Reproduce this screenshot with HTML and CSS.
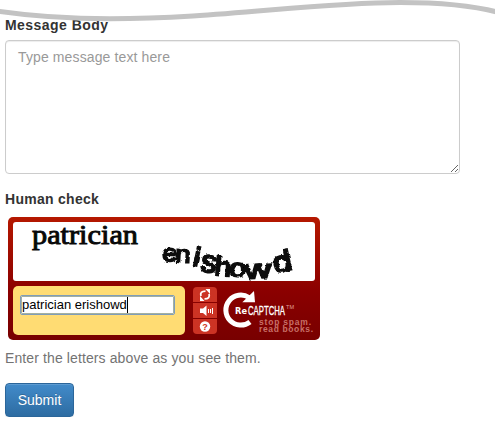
FILE: index.html
```html
<!DOCTYPE html>
<html lang="en">
<head>
<meta charset="utf-8">
<title>Message</title>
<link rel="stylesheet" href="styles.css">
</head>
<body>
<svg class="tear" viewBox="0 0 495 20" aria-hidden="true"><path class="tear-mask" d="M0 0H495V10C460 2 425 2 390 2C310 3 220 18 130 18C70 18 35 14 0 11Z"/><path class="tear-line" d="M-2 11.3C30 16 65 18.8 110 18.8C220 18.8 310 2.5 400 2.5C440 2.5 470 5 497 12"/></svg>
<form class="form">
  <label class="label" for="message">Message Body</label>
  <textarea class="message" id="message" placeholder="Type message text here"></textarea>
  <label class="label check-label" for="answer">Human check</label>
  <section class="captcha">
    <svg class="challenge" viewBox="0 0 302 59">
      <defs><filter id="rough"><feTurbulence type="fractalNoise" baseFrequency=".25" numOctaves="2" seed="4"/><feDisplacementMap in="SourceGraphic" scale="3" xChannelSelector="R" yChannelSelector="G"/></filter></defs>
      <text class="word-one" x="19" y="22" textLength="106" lengthAdjust="spacingAndGlyphs">patrician</text>
      <g class="word-two" filter="url(#rough)">
        <text transform="translate(149 39) rotate(1) scale(1.15 1)">e</text>
        <text transform="translate(162 40) rotate(3) scale(1.15 1)">n</text>
        <text transform="translate(179 43) rotate(12) scale(1.2 1.1)">i</text>
        <text transform="translate(187 49) rotate(8) scale(1.3 1.3)">s</text>
        <text transform="translate(201 53) rotate(5) scale(1.25 1.1)">h</text>
        <text transform="translate(216 54) rotate(3) scale(1.25 1.05)">o</text>
        <text transform="translate(232 57) rotate(-4) scale(1.55 1.1)">w</text>
        <text transform="translate(262 51) rotate(-12) scale(1.4 1.2)">d</text>
      </g>
    </svg>
    <div class="controls">
      <div class="answer-panel"><div class="answer" id="answer"><span>patrician erishowd</span><i class="caret"></i></div></div>
      <div class="tools">
        <button type="button" class="tool" aria-label="Refresh"><svg viewBox="0 0 24 16"><path class="stroke" d="M8 9C7 6 8.5 4.2 12.5 4.2M16 7C17 10 15.5 11.8 11.5 11.8"/><path class="solid" d="M12.5 2H17V7ZM11.5 14H7V9Z"/></svg></button>
        <button type="button" class="tool" aria-label="Audio"><svg viewBox="0 0 24 16"><path class="solid" d="M7 5.5H10L13.5 2.5V13L10 10H7Z"/><path class="thin" d="M15.5 6V10M17.5 6V10M19.5 5V11"/></svg></button>
        <button type="button" class="tool" aria-label="Help"><svg viewBox="0 0 24 16"><circle class="solid" cx="12" cy="7.5" r="5.2"/><text class="question" x="12" y="11">?</text></svg></button>
      </div>
      <svg class="logo" viewBox="0 0 92 50">
        <path class="logo-ring" d="M27 8.5A15 15 0 1 0 28 33"/>
        <path class="solid" d="M32 2L33 13.3H20.3Z"/>
        <text class="re" x="13" y="24.5" textLength="12" lengthAdjust="spacingAndGlyphs">Re</text>
        <text class="brand" x="26" y="25.5" textLength="37" lengthAdjust="spacingAndGlyphs">CAPTCHA</text>
        <text class="tm" x="64" y="20" textLength="8" lengthAdjust="spacingAndGlyphs">TM</text>
        <text class="tagline" x="37" y="35.5" textLength="52">stop spam.</text>
        <text class="tagline" x="37" y="43" textLength="54">read books.</text>
      </svg>
    </div>
  </section>
  <p class="help">Enter the letters above as you see them.</p>
  <button class="submit" type="button">Submit</button>
</form>
</body>
</html>
```
FILE: styles.css
```css
* { box-sizing: border-box; }
body { margin: 0; background: #fff; color: #333; font: 14px/20px "Liberation Sans", Arial, sans-serif; overflow: hidden; }
.tear { position: absolute; left: 0; top: 0; width: 495px; height: 20px; overflow: visible; }
.tear-mask { fill: #fff; }
.tear-line { fill: none; stroke: #c3c3c3; stroke-width: 5; }
.form { padding: 15px 5px 0; }
.label { display: block; height: 20px; margin-bottom: 5px; font-weight: bold; letter-spacing: .45px; }
.message { display: block; width: 455px; height: 134px; margin: 0; padding: 6px 12px; border: 1px solid #ccc; border-radius: 4px; box-shadow: inset 0 1px 1px rgba(0,0,0,.075); font: inherit; letter-spacing: .12px; resize: both; }
.message::placeholder { color: #999; opacity: 1; }
.check-label { margin: 15px 0 8px; letter-spacing: .28px; }
.captcha { width: 312px; height: 123px; margin-left: 3px; padding: 5px; border-radius: 5px; background: linear-gradient(#b51800, #8b0000 60%, #780000); }
.challenge { display: block; width: 302px; height: 59px; border-radius: 3px; background: #fff; }
.word-one { font: 27px "Liberation Serif", serif; fill: #080808; stroke: #080808; stroke-width: .9; }
.word-two { font: 24px "Liberation Sans", sans-serif; fill: #080808; stroke: #080808; stroke-width: 1.7; }
.controls { display: flex; margin-top: 5px; }
.answer-panel { flex: none; width: 172px; height: 49px; padding: 9px 7px; border-radius: 5px; background: #ffdc73; }
.answer { display: flex; align-items: center; width: 155px; height: 20px; padding-left: 1px; border: 1px solid #7f9db9; outline: 1px solid #a4b0a0; outline-offset: -2px; border-radius: 2px; background: #fff; color: #000; font-size: 13px; white-space: nowrap; }
.caret { width: 1px; height: 16px; background: #000; }
.tools { flex: none; display: flex; flex-direction: column; gap: 1px; width: 24px; height: 47px; margin: 1px 0 0 8px; overflow: hidden; border-radius: 4px; }
.tool { width: 24px; height: 15px; padding: 0; border: 0; background: #cc3324; }
.tool svg { display: block; width: 24px; height: 16px; }
.solid { fill: #fff; }
.stroke { fill: none; stroke: #fff; stroke-width: 1.8; }
.thin { fill: none; stroke: #fff; stroke-width: 1; }
.question { font: bold 9px "Liberation Sans", sans-serif; text-anchor: middle; fill: #cc3324; }
.logo { flex: none; width: 92px; height: 50px; margin: 3px 0 -4px 5px; overflow: visible; }
.logo-ring { fill: none; stroke: #fff; stroke-width: 5; }
.re { font: bold 8px "DejaVu Sans", sans-serif; fill: #fff; }
.brand { font: 12.5px "Liberation Sans", sans-serif; fill: #fff; stroke: #fff; stroke-width: .3; }
.tm { font: 5px "Liberation Sans", sans-serif; fill: #e0a09a; }
.tagline { font: bold 8.5px "Liberation Sans", sans-serif; fill: #c87068; }
.help { margin: 8px 0 15px; color: #737373; letter-spacing: .11px; }
.submit { display: block; width: 69px; height: 34px; padding: 6px 0; border: 1px solid #2b669a; border-radius: 4px; background: linear-gradient(#428bca, #2d6ca2); box-shadow: inset 0 1px 0 rgba(255,255,255,.15), 0 1px 1px rgba(0,0,0,.075); color: #fff; font: inherit; text-shadow: 0 -1px 0 rgba(0,0,0,.2); }
```
